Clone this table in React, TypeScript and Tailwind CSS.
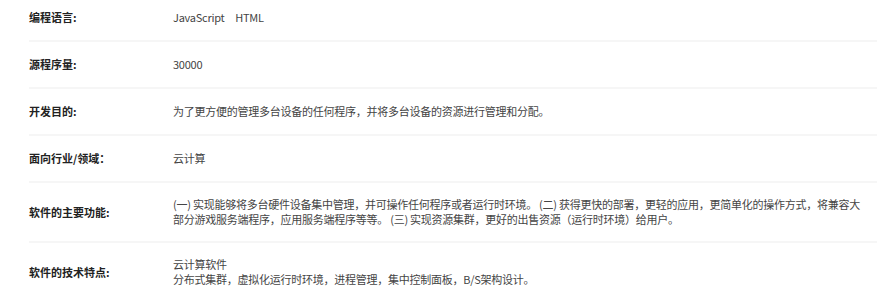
const ROWS: { label: string; lines: string[] }[] = [
  { label: "编程语言:", lines: ["JavaScript\u3000HTML"] },
  { label: "源程序量:", lines: ["30000"] },
  {
    label: "开发目的:",
    lines: ["为了更方便的管理多台设备的任何程序，并将多台设备的资源进行管理和分配。"],
  },
  { label: "面向行业/领域：", lines: ["云计算"] },
  {
    label: "软件的主要功能:",
    lines: [
      "(一) 实现能够将多台硬件设备集中管理，并可操作任何程序或者运行时环境。 (二) 获得更快的部署，更轻的应用，更简单化的操作方式，将兼容大",
      "部分游戏服务端程序，应用服务端程序等等。 (三) 实现资源集群，更好的出售资源（运行时环境）给用户。",
    ],
  },
  {
    label: "软件的技术特点:",
    lines: ["云计算软件", "分布式集群，虚拟化运行时环境，进程管理，集中控制面板，B/S架构设计。"],
  },
];

export default function App() {
  return (
    <div className="h-[300px] overflow-hidden bg-white pl-[29px] font-['Noto_Sans_CJK_SC','Noto_Sans',sans-serif] text-[11px]">
      <div className="-mt-[5px]">
        {ROWS.map((r, i) => (
          <div
            key={i}
            className="flex min-h-[47px] items-center border-b-2 border-[#f6f6f6] py-[14px] leading-[15px]"
          >
            <div className="w-[144px] shrink-0 font-bold text-[#222]">{r.label}</div>
            <div className="tracking-[-0.25px] text-[#444]">
              {r.lines.map((l, j) => (
                <div key={j} className="whitespace-nowrap">
                  {l}
                </div>
              ))}
            </div>
          </div>
        ))}
      </div>
    </div>
  );
}
